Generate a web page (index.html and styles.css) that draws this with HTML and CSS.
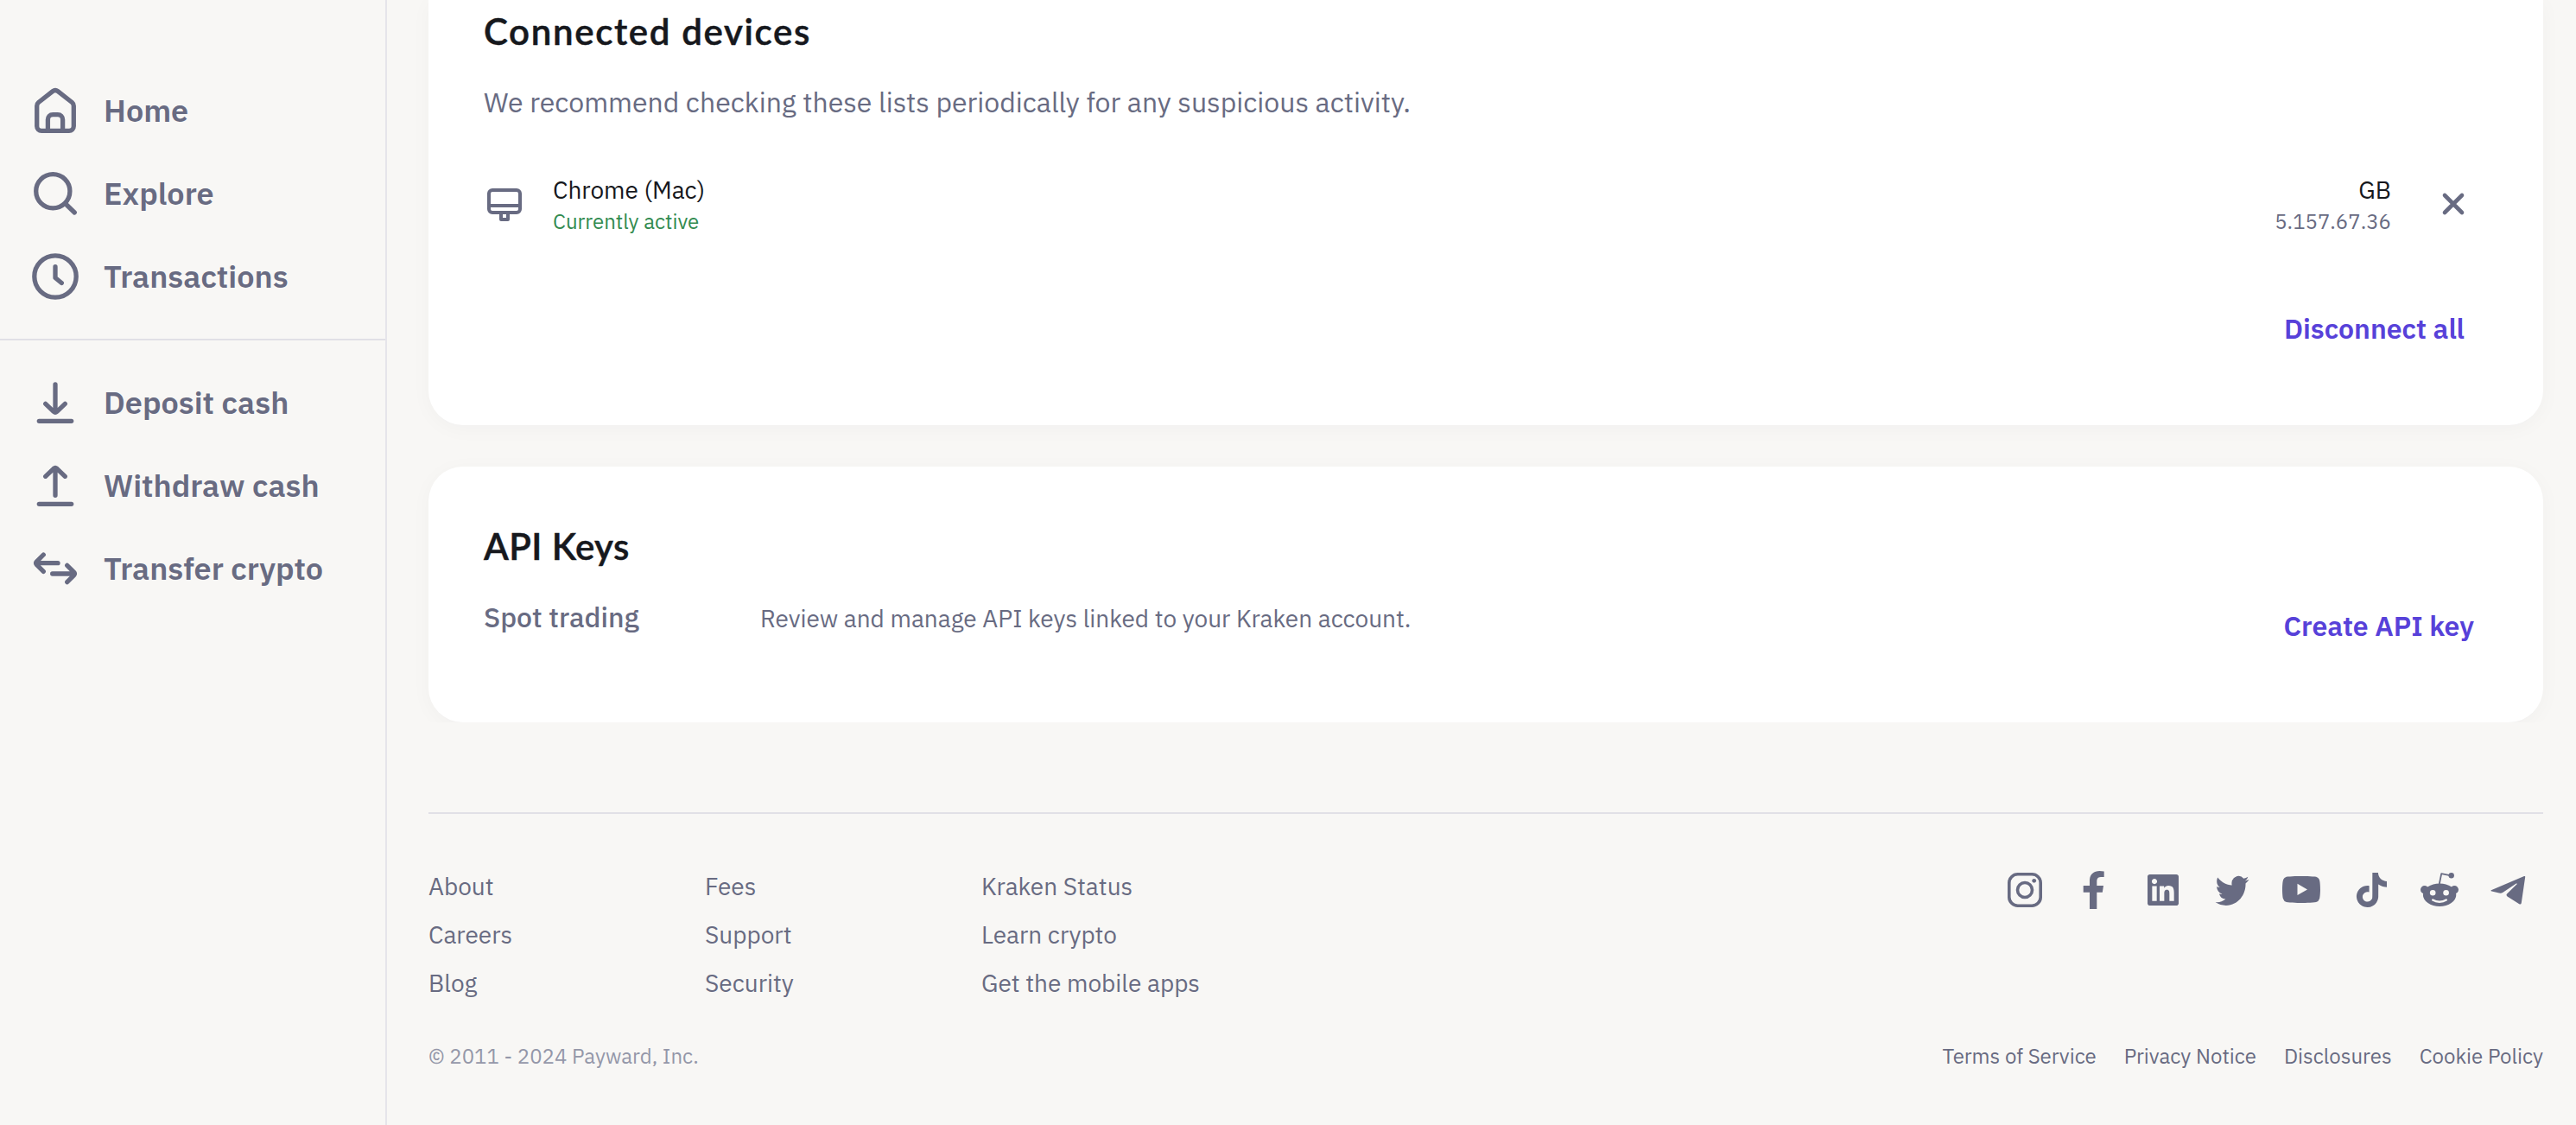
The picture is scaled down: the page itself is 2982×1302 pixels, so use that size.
FILE: index.html
```
<!DOCTYPE html>
<html lang="en">
<head>
    <meta charset="UTF-8">
    <meta name="viewport" content="width=device-width, initial-scale=1.0">
    <title>Security settings</title>
    <link rel="stylesheet" href="styles.css">
</head>
<body>
    <div class="page">
        <aside class="sidebar">
            <nav class="nav">
                <a class="nav-item" href="#">
                    <svg class="nav-icon" viewBox="0 0 64 64">
                        <path d="M10.7 26.5c0-1.6.7-3 1.9-4L29 9.7c1.8-1.4 4.2-1.4 6 0l16.4 12.8c1.2 1 1.9 2.4 1.9 4V50c0 3-2.3 5.3-5.3 5.3H16c-3 0-5.3-2.3-5.3-5.3z"/>
                        <path d="M23.4 55V42.5c0-3.6 2.2-5.8 5.8-5.8h5.6c3.6 0 5.8 2.2 5.8 5.8V55"/>
                    </svg>
                    <span>Home</span>
                </a>
                <a class="nav-item" href="#">
                    <svg class="nav-icon" viewBox="0 0 64 64">
                        <circle cx="29.3" cy="29.3" r="19.6"/>
                        <path d="M44 44l10.3 10"/>
                    </svg>
                    <span>Explore</span>
                </a>
                <a class="nav-item" href="#">
                    <svg class="nav-icon" viewBox="0 0 64 64">
                        <circle cx="32" cy="32" r="24.2"/>
                        <path d="M32 20.7v12.8l7.3 6"/>
                    </svg>
                    <span>Transactions</span>
                </a>
            </nav>
            <nav class="nav nav-bottom">
                <a class="nav-item" href="#">
                    <svg class="nav-icon" viewBox="0 0 64 64">
                        <path d="M32 11v32M20.7 33.3l9.4 9c1.1 1 2.7 1 3.8 0l9.4-9M13.3 53.3h37.4"/>
                    </svg>
                    <span>Deposit cash</span>
                </a>
                <a class="nav-item" href="#">
                    <svg class="nav-icon" viewBox="0 0 64 64">
                        <path d="M32 43.3v-32M20.7 21.3l9.4-9c1.1-1 2.7-1 3.8 0l9.4 9M13.3 53.3h37.4"/>
                    </svg>
                    <span>Withdraw cash</span>
                </a>
                <a class="nav-item" href="#">
                    <svg class="nav-icon" viewBox="0 0 64 64">
                        <path d="M35 25.7H10.5M18.3 16l-7.8 7.8c-1 1.1-1 2.7 0 3.8l7.8 7.8M28.7 38h24.8M45.7 28.3l7.8 7.8c1 1.1 1 2.7 0 3.8l-7.8 7.8"/>
                    </svg>
                    <span>Transfer crypto</span>
                </a>
            </nav>
        </aside>

        <main class="main">
            <section class="card card-devices">
                <h2 class="title-devices">Connected devices</h2>
                <p class="intro">We recommend checking these lists periodically for any suspicious activity.</p>

                <div class="device">
                    <svg class="device-icon" viewBox="0 0 48 48">
                        <rect x="6" y="8" width="36" height="26" rx="4"/>
                        <path d="M6 26h36M20 35v7h8v-7"/>
                    </svg>
                    <div class="device-name">
                        <div class="text">Chrome (Mac)</div>
                        <div class="small active">Currently active</div>
                    </div>
                    <div class="device-location">
                        <div class="text">GB</div>
                        <div class="small">5.157.67.36</div>
                    </div>
                    <svg class="close-icon" viewBox="0 0 48 48">
                        <path d="M14 14l20 20M34 14L14 34"/>
                    </svg>
                </div>

                <div class="card-actions">
                    <a class="link-btn" href="#">Disconnect all</a>
                </div>
            </section>

            <section class="card card-api">
                <h2>API Keys</h2>
                <div class="api-row">
                    <div class="api-info">
                        <div class="api-label">Spot trading</div>
                        <div class="api-text">Review and manage API keys linked to your Kraken account.</div>
                    </div>
                    <a class="link-btn create" href="#">Create API key</a>
                </div>
            </section>

            <footer class="footer">
                <div class="footer-top">
                    <div class="footer-links">
                        <div class="footer-col">
                            <a href="#">About</a>
                            <a href="#">Careers</a>
                            <a href="#">Blog</a>
                        </div>
                        <div class="footer-col">
                            <a href="#">Fees</a>
                            <a href="#">Support</a>
                            <a href="#">Security</a>
                        </div>
                        <div class="footer-col">
                            <a href="#">Kraken Status</a>
                            <a href="#">Learn crypto</a>
                            <a href="#">Get the mobile apps</a>
                        </div>
                    </div>
                    <div class="social">
                        <!-- Instagram -->
                        <svg viewBox="0 0 48 48">
                            <g fill="none" stroke="currentColor" stroke-width="3.6">
                                <rect x="5.8" y="5.8" width="36.4" height="36.4" rx="10"/>
                                <circle cx="24" cy="24" r="8.5"/>
                            </g>
                            <circle cx="34.7" cy="13.3" r="2.4"/>
                        </svg>
                        <!-- Facebook -->
                        <svg viewBox="0 0 48 48">
                            <path d="M27.3 46V26.7h6.5L35 19h-7.7v-5c0-2.8 1.2-5 4.7-5h3.7V2.6C34 2.2 32.3 2 30.5 2 23.5 2 19 6.2 19 13v6h-7.3v7.7H19V46z"/>
                        </svg>
                        <!-- LinkedIn -->
                        <svg viewBox="0 0 48 48">
                            <path transform="translate(6 6) scale(1.5)" d="M20.447 20.452h-3.554v-5.569c0-1.328-.027-3.037-1.852-3.037-1.853 0-2.136 1.445-2.136 2.939v5.667H9.351V9h3.414v1.561h.046c.477-.9 1.637-1.85 3.37-1.85 3.601 0 4.267 2.37 4.267 5.455v6.286zM5.337 7.433c-1.144 0-2.063-.926-2.063-2.065 0-1.138.92-2.063 2.063-2.063 1.14 0 2.064.925 2.064 2.063 0 1.139-.925 2.065-2.064 2.065zm1.782 13.019H3.555V9h3.564v11.452zM22.225 0H1.771C.792 0 0 .774 0 1.729v20.542C0 23.227.792 24 1.771 24h20.451C23.2 24 24 23.227 24 22.271V1.729C24 .774 23.2 0 22.222 0h.003z"/>
                        </svg>
                        <!-- Twitter -->
                        <svg viewBox="0 0 48 48">
                            <path transform="translate(4.6 4.1) scale(1.62 1.74)" d="M23.953 4.57a10 10 0 01-2.825.775 4.958 4.958 0 002.163-2.723c-.951.555-2.005.959-3.127 1.184a4.92 4.92 0 00-8.384 4.482C7.69 8.095 4.067 6.13 1.64 3.162a4.822 4.822 0 00-.666 2.475c0 1.71.87 3.213 2.188 4.096a4.904 4.904 0 01-2.228-.616v.06a4.923 4.923 0 003.946 4.827 4.996 4.996 0 01-2.212.085 4.936 4.936 0 004.604 3.417 9.867 9.867 0 01-6.102 2.105c-.39 0-.779-.023-1.17-.067a13.995 13.995 0 007.557 2.209c9.053 0 13.998-7.496 13.998-13.985 0-.21 0-.42-.015-.63A9.935 9.935 0 0024 4.59z"/>
                        </svg>
                        <!-- YouTube -->
                        <svg viewBox="0 0 48 48">
                            <path transform="translate(2 1.4) scale(1.833)" d="M23.498 6.186a3.016 3.016 0 0 0-2.122-2.136C19.505 3.545 12 3.545 12 3.545s-7.505 0-9.377.505A3.017 3.017 0 0 0 .502 6.186C0 8.07 0 12 0 12s0 3.93.502 5.814a3.016 3.016 0 0 0 2.122 2.136c1.871.505 9.376.505 9.376.505s7.505 0 9.377-.505a3.015 3.015 0 0 0 2.122-2.136C24 15.93 24 12 24 12s0-3.93-.502-5.814zM9.545 15.568V8.432L15.818 12l-6.273 3.568z"/>
                        </svg>
                        <!-- TikTok -->
                        <svg viewBox="0 0 48 48">
                            <path transform="translate(5.3 4) scale(1.68 1.667)" d="M12.525.02c1.31-.02 2.61-.01 3.91-.02.08 1.53.63 3.09 1.75 4.17 1.12 1.11 2.7 1.62 4.24 1.79v4.03c-1.44-.05-2.89-.35-4.2-.97-.57-.26-1.1-.59-1.62-.93-.01 2.92.01 5.84-.02 8.75-.08 1.4-.54 2.79-1.35 3.94-1.31 1.92-3.58 3.17-5.91 3.21-1.43.08-2.86-.31-4.08-1.03-2.02-1.19-3.44-3.37-3.65-5.71-.02-.5-.03-1-.01-1.49.18-1.9 1.12-3.72 2.58-4.96 1.66-1.44 3.98-2.13 6.15-1.72.02 1.48-.04 2.96-.04 4.44-.99-.32-2.15-.23-3.02.37-.63.41-1.11 1.04-1.36 1.75-.21.51-.15 1.07-.14 1.61.24 1.64 1.82 3.02 3.5 2.87 1.12-.01 2.19-.66 2.77-1.61.19-.33.4-.67.41-1.06.1-1.79.06-3.57.07-5.36.01-4.03-.01-8.05.02-12.07z"/>
                        </svg>
                        <!-- Reddit -->
                        <svg viewBox="0 0 48 48">
                            <circle cx="6.7" cy="23.8" r="4.7"/>
                            <circle cx="41.3" cy="23.8" r="4.7"/>
                            <ellipse cx="24.1" cy="29.7" rx="19.2" ry="13.3"/>
                            <circle cx="37.7" cy="7.3" r="3.2"/>
                            <path d="M23.8 17l2.4-11.8 11 2.1" fill="none" stroke="currentColor" stroke-width="1.8" stroke-linejoin="round"/>
                            <circle class="cutout" cx="16.2" cy="27.2" r="3.3"/>
                            <circle class="cutout" cx="31.6" cy="27.2" r="3.3"/>
                            <path class="smile" d="M16.2 35.6c4.4 2.8 11.2 2.8 15.6 0"/>
                        </svg>
                        <!-- Telegram -->
                        <svg viewBox="0 0 48 48">
                            <path d="M3.8 24.2L42 8q1.4-.3 1.2 1l-4.4 30q-.5 2.3-2.5 1.3l-13.8-8.8q-1.9-1.5-.2-3.2l11.3-11.1q.6-1-.8-.6L17.5 26.8q-2 1.2-4.5.7l-8.5-1.9q-1.5-.6-.7-1.4z"/>
                        </svg>
                    </div>
                </div>
                <div class="footer-bottom">
                    <div class="copyright">© 2011 - 2024 Payward, Inc.</div>
                    <div class="legal">
                        <a href="#">Terms of Service</a>
                        <a href="#">Privacy Notice</a>
                        <a href="#">Disclosures</a>
                        <a href="#">Cookie Policy</a>
                    </div>
                </div>
            </footer>
        </main>
    </div>
</body>
</html>
```
FILE: styles.css
```
* {
    box-sizing: border-box;
}
body {
    margin: 0;
    background-color: #f8f7f5;
    color: #686b82;
    font-family: "IBM Plex Sans", Roboto, sans-serif;
}
a {
    color: inherit;
    text-decoration: none;
}
h2, p {
    margin: 0;
}
svg {
    display: block;
    flex-shrink: 0;
}
.page {
    display: flex;
    height: 1302px;
    overflow: hidden;
}

/* Sidebar */
.sidebar {
    width: 448px;
    flex-shrink: 0;
    padding-top: 96px;
    border-right: 2px solid #e6e5ea;
}
.nav {
    display: flex;
    flex-direction: column;
    gap: 32px;
    padding-left: 32px;
}
.nav-bottom {
    margin-top: 40px;
    padding-top: 40px;
    border-top: 2px solid #e1e0e6;
}
.nav-item {
    display: flex;
    align-items: center;
    gap: 24px;
    height: 64px;
    font-size: 36px;
    font-weight: 600;
    line-height: 48px;
}
.nav-icon {
    width: 64px;
    height: 64px;
    fill: none;
    stroke: currentColor;
    stroke-width: 5.3;
    stroke-linecap: round;
    stroke-linejoin: round;
}

/* Cards */
.main {
    flex: 1;
    padding: 0 38px 0 48px;
}
.card {
    padding: 0 80px 87px 64px;
    background-color: #fff;
    border-radius: 40px;
    box-shadow: 0 4px 24px rgba(16, 11, 50, 0.03);
}
.card-devices {
    height: 492px;
    padding-top: 8px;
    border-radius: 0 0 40px 40px;
}
.card-api {
    height: 296px;
    margin-top: 48px;
    padding-top: 64px;
    clip-path: inset(-40px -38px 0 -48px);
}
h2 {
    color: #16181d;
    font-family: Lato, sans-serif;
    font-size: 42px;
    font-weight: 600;
    line-height: 56px;
    letter-spacing: 0.42px;
    -webkit-text-stroke: 0.5px #16181d;
}
.title-devices {
    letter-spacing: 1.65px;
}
.intro {
    margin-top: 30px;
    font-size: 32px;
    line-height: 48px;
}
.device {
    display: flex;
    align-items: center;
    margin-top: 57px;
}
.device-icon {
    width: 48px;
    height: 48px;
    margin-right: 32px;
    fill: none;
    stroke: currentColor;
    stroke-width: 4;
    stroke-linejoin: round;
}
.device-location {
    margin-left: auto;
    text-align: right;
}
.close-icon {
    width: 48px;
    height: 48px;
    margin-left: 48px;
    fill: none;
    stroke: currentColor;
    stroke-width: 4.6;
    stroke-linecap: round;
}
.text {
    padding-top: 2px;
    color: #16181d;
    font-size: 28px;
    line-height: 38px;
}
.small {
    font-size: 24px;
    line-height: 34px;
}
.active {
    color: #328b50;
}
.card-actions {
    display: flex;
    justify-content: flex-end;
    margin-top: 83px;
    padding-right: 11px;
}
.link-btn {
    color: #5741d9;
    font-size: 32px;
    font-weight: 600;
    line-height: 48px;
}
.create {
    margin-top: 10px;
}
.api-row {
    display: flex;
    justify-content: space-between;
    margin-top: 30px;
}
.api-info {
    display: flex;
    align-items: baseline;
    line-height: 48px;
}
.api-label {
    width: 320px;
    font-size: 32px;
    font-weight: 500;
}
.api-text {
    font-size: 28px;
}

/* Footer */
.footer {
    margin-top: 104px;
    padding-top: 56px;
    border-top: 2px solid #e1e0e6;
}
.footer-top {
    display: flex;
    justify-content: space-between;
}
.footer-links {
    display: flex;
    font-size: 28px;
    line-height: 56px;
}
.footer-col {
    display: flex;
    flex-direction: column;
    width: 320px;
}
.social {
    display: flex;
    gap: 32px;
    padding: 8px 16px 0 0;
}
.social svg {
    width: 48px;
    height: 48px;
    fill: currentColor;
}
.social .cutout {
    fill: #f8f7f5;
}
.social .smile {
    fill: none;
    stroke: #f8f7f5;
    stroke-width: 2.4;
    stroke-linecap: round;
}
.footer-bottom {
    display: flex;
    justify-content: space-between;
    margin-top: 36px;
    font-size: 24px;
    line-height: 40px;
}
.copyright {
    color: #9497a9;
}
.legal {
    display: flex;
    gap: 32px;
}
```
